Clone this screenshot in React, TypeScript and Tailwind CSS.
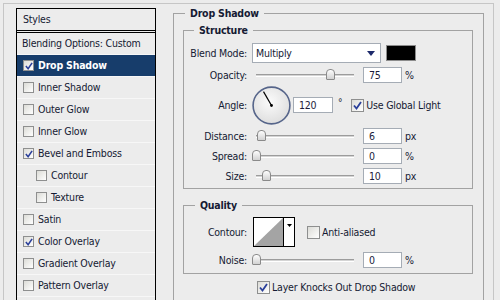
import React from 'react';

const FONT = "[font-family:Tahoma,'DejaVu_Sans_Condensed','Liberation_Sans',sans-serif]";

type Item = { label: string; checked?: boolean; selected?: boolean; indent?: boolean; noBox?: boolean };

const ITEMS: Item[] = [
  { label: 'Blending Options: Custom', noBox: true },
  { label: 'Drop Shadow', checked: true, selected: true },
  { label: 'Inner Shadow' },
  { label: 'Outer Glow' },
  { label: 'Inner Glow' },
  { label: 'Bevel and Emboss', checked: true },
  { label: 'Contour', indent: true },
  { label: 'Texture', indent: true },
  { label: 'Satin' },
  { label: 'Color Overlay', checked: true },
  { label: 'Gradient Overlay' },
  { label: 'Pattern Overlay' },
];

function CheckBox({ checked, big }: { checked?: boolean; big?: boolean }) {
  return (
    <span
      className={`flex-shrink-0 flex items-center justify-center border border-[#8e8f8f] bg-gradient-to-br from-[#dcdcd7] to-[#ffffff] ${
        big ? 'w-[13px] h-[13px]' : 'w-[11px] h-[11px]'
      }`}
    >
      {checked && (
        <svg width={big ? 9 : 8} height={big ? 9 : 8} viewBox="0 0 9 9">
          <path d="M1 4.5 L3.5 7.5 L8 1" fill="none" stroke="#2a3f9a" strokeWidth="1.8" />
        </svg>
      )}
    </span>
  );
}

function Slider({ value }: { value: number }) {
  return (
    <div className="relative w-[106px] h-[14px] flex items-center">
      <div className="mx-[4px] w-full h-[3px] border-t border-[#9c9c9c] border-b border-b-white bg-[#d4d4d4]" />
      <div
        className="absolute top-[1px] w-[9px] h-[11px] rounded-t-[4px] rounded-b-[1px] border border-[#8a8a8a] bg-gradient-to-b from-[#fefefe] to-[#d2d2d2]"
        style={{ left: `${value * 98}px` }}
      />
    </div>
  );
}

function NumBox({ value, w = 'w-[39px]' }: { value: string; w?: string }) {
  return (
    <div className={`${w} h-[16px] border border-[#a5acb5] bg-white pl-[5px] leading-[14px] text-[#1c1c3a]`}>{value}</div>
  );
}

function Label({ children }: { children: React.ReactNode }) {
  return <div className="w-[63px] text-right flex-shrink-0">{children}</div>;
}

function SliderRow({ label, value, pos, unit, mt }: { label: string; value: string; pos: number; unit: string; mt: string }) {
  return (
    <div className={`flex items-center h-[16px] ${mt}`}>
      <Label>{label}</Label>
      <div className="ml-[5px]">
        <Slider value={pos} />
      </div>
      <div className="ml-[5px]">
        <NumBox value={value} />
      </div>
      <span className="ml-[3px]">{unit}</span>
    </div>
  );
}

function Dial() {
  const r = 18;
  const a = (120 * Math.PI) / 180;
  return (
    <svg width="39" height="39" viewBox="0 0 39 39">
      <defs>
        <radialGradient id="dialFill" cx="45%" cy="40%" r="65%">
          <stop offset="0" stopColor="#fbfbfb" />
          <stop offset="1" stopColor="#dcdcdc" />
        </radialGradient>
      </defs>
      <circle cx="19.5" cy="19.5" r="18.4" fill="url(#dialFill)" stroke="#56658a" strokeWidth="1.6" />
      <line x1="19.5" y1="19.5" x2={19.5 + Math.cos(a) * (r - 2)} y2={19.5 - Math.sin(a) * (r - 2)} stroke="#000" strokeWidth="1.2" />
      <circle cx="19.5" cy="19.5" r="1.4" fill="#000" />
    </svg>
  );
}

export default function App() {
  return (
    <div className={`w-[500px] h-[300px] overflow-hidden bg-[#ececec] text-[10.5px] tracking-[-0.2px] leading-[13px] text-[#151a33] ${FONT}`}>
      <div className="ml-[3px] mt-[3px] w-[491px] h-[300px] border-t border-x border-[#c6c6c6] pl-[12px] pt-[4px] flex">
        {/* Styles list */}
        <div className="w-[140px] flex-shrink-0 border-x border-black">
          <div className="h-[23px] border-y border-black pl-[6px] flex items-center">Styles</div>
          <div className="mt-[1px] border-t border-black">
            {ITEMS.map((it) => (
              <div
                key={it.label}
                className={`h-[22px] flex items-center border-b border-[#f7f7f7] ${
                  it.selected ? 'bg-[#173d6b] text-white font-bold' : ''
                } ${it.noBox ? 'pl-[5px]' : it.indent ? 'pl-[19px]' : 'pl-[6px]'}`}
              >
                {!it.noBox && (
                  <span className="mr-[4px]">
                    <CheckBox checked={it.checked} />
                  </span>
                )}
                {it.label}
              </div>
            ))}
          </div>
        </div>

        {/* Drop Shadow panel */}
        <fieldset className="ml-[17px] mt-[-2px] w-[311px] h-[295px] border border-[#a2a2a2] px-0 pb-[3px]">
          <legend className="ml-[11px] px-[5px] font-bold leading-[14px]">Drop Shadow</legend>

          <fieldset className="mt-[3px] ml-[9px] w-[290px] border border-[#a2a2a2] px-0 pt-[6px] pb-[4px]">
            <legend className="ml-[10px] px-[5px] font-bold leading-[14px]">Structure</legend>

            <div className="flex items-center h-[20px]">
              <Label>Blend Mode:</Label>
              <div className="ml-[5px] w-[129px] h-[20px] border border-[#a5acb5] bg-white pl-[3px] flex items-center justify-between pr-[5px]">
                <span>Multiply</span>
                <svg width="8" height="5" viewBox="0 0 8 5">
                  <path d="M0 0 H8 L4 5 Z" fill="#1d2a6b" />
                </svg>
              </div>
              <div className="ml-[5px] w-[30px] h-[16px] border border-[#8c8c8c] bg-black" />
            </div>

            <SliderRow label="Opacity:" value="75" pos={0.75} unit="%" mt="mt-[4px]" />

            <div className="flex items-center h-[38px] mt-[3px]">
              <Label>Angle:</Label>
              <div className="ml-[5px]">
                <Dial />
              </div>
              <div className="ml-[2px]">
                <NumBox value="120" w="w-[40px]" />
              </div>
              <span className="ml-[5px] self-start mt-[10px] text-[10px]">°</span>
              <span className="ml-[9px] flex items-center">
                <CheckBox checked big />
                <span className="ml-[2px]">Use Global Light</span>
              </span>
            </div>

            <SliderRow label="Distance:" value="6" pos={0.056} unit="px" mt="mt-[4px]" />
            <SliderRow label="Spread:" value="0" pos={0} unit="%" mt="mt-[4px]" />
            <SliderRow label="Size:" value="10" pos={0.1} unit="px" mt="mt-[4px]" />
          </fieldset>

          <fieldset className="mt-[9px] ml-[9px] w-[290px] border border-[#a2a2a2] px-0 pt-[5px] pb-[5px]">
            <legend className="ml-[11px] px-[5px] font-bold leading-[14px]">Quality</legend>

            <div className="flex items-center h-[30px]">
              <Label>Contour:</Label>
              <div className="ml-[6px] w-[42px] h-[30px] border border-black bg-white flex">
                <svg width="29" height="28" viewBox="0 0 29 28">
                  <path d="M0 28 L29 0 V28 Z" fill="#a4a4a4" />
                </svg>
                <div className="flex-1 border-l border-black flex justify-center pt-[6px]">
                  <svg width="5" height="3" viewBox="0 0 5 3">
                    <path d="M0 0 H5 L2.5 3 Z" fill="#000" />
                  </svg>
                </div>
              </div>
              <span className="ml-[12px] flex items-center">
                <CheckBox big />
                <span className="ml-[2px]">Anti-aliased</span>
              </span>
            </div>

            <SliderRow label="Noise:" value="0" pos={0} unit="%" mt="mt-[5px]" />
          </fieldset>

          <div className="mt-[7px] pl-[83px] flex items-center h-[13px]">
            <CheckBox checked big />
            <span className="ml-[2px]">Layer Knocks Out Drop Shadow</span>
          </div>
        </fieldset>
      </div>
    </div>
  );
}
